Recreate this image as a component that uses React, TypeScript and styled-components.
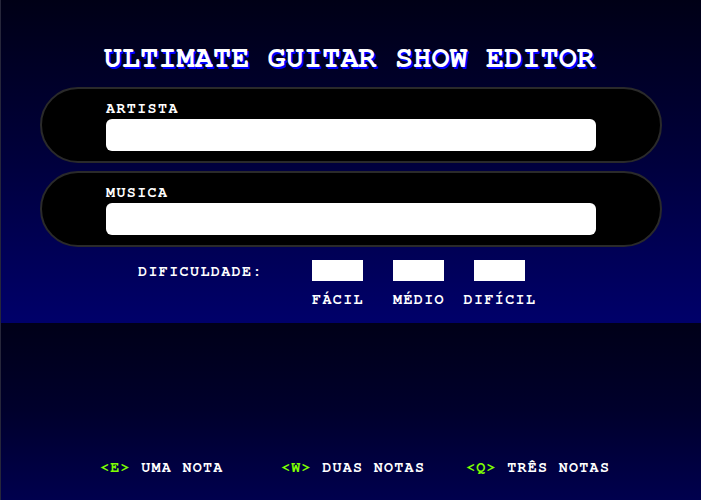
import React from "react";
import styled, { createGlobalStyle } from "styled-components";

const GlobalStyle = createGlobalStyle`
  html, body {
    margin: 0;
    padding: 0;
    background: #000010;
  }
  * { box-sizing: border-box; }
`;

const Screen = styled.div`
  width: 701px;
  height: 500px;
  display: flex;
  flex-direction: column;
  border-left: 1px solid #26263a;
  font-family: "Nimbus Mono PS", "FreeMono", "Courier New", "Liberation Mono", monospace;
  font-weight: bold;
  color: #ffffff;
  overflow: hidden;
`;

const EditorArea = styled.section`
  height: 323px;
  display: flex;
  flex-direction: column;
  align-items: center;
  padding-top: 41px;
  background: linear-gradient(to bottom, #000016 0%, #000038 45%, #00006a 100%);
`;

const Title = styled.h1`
  margin: 0 0 12px 0;
  padding-right: 3px;
  font-size: 30px;
  line-height: 34px;
  font-weight: bold;
  letter-spacing: 0.2px;
  color: #ffffff;
  text-shadow: 2px 2px 0 #0000ff;
  white-space: nowrap;
`;

const FieldPanel = styled.div`
  width: 622px;
  height: 76px;
  margin-bottom: 8px;
  border: 2px solid #2a2a2a;
  border-radius: 38px;
  background: #000000;
  padding: 12px 64px 0 64px;
  display: flex;
  flex-direction: column;
`;

const FieldLabel = styled.label`
  font-size: 15px;
  line-height: 16px;
  letter-spacing: 1.4px;
  margin-bottom: 2px;
`;

const TextInput = styled.input`
  width: 490px;
  height: 32px;
  border: none;
  border-radius: 6px;
  background: #ffffff;
  outline: none;
  padding: 0 8px;
  font-family: inherit;
  font-size: 14px;
`;

const DifficultyRow = styled.div`
  align-self: stretch;
  display: flex;
  align-items: flex-start;
  padding-left: 137px;
  margin-top: 5px;
`;

const DifficultyLabel = styled.span`
  width: 174px;
  font-size: 15px;
  line-height: 21px;
  padding-top: 1px;
  letter-spacing: 1.4px;
`;

const Options = styled.div`
  display: flex;
  gap: 30px;
`;

const Option = styled.div`
  width: 51px;
  display: flex;
  flex-direction: column;
  align-items: center;
`;

const OptionBox = styled.div`
  width: 51px;
  height: 21px;
  background: #ffffff;
`;

const OptionLabel = styled.span`
  margin-top: 11px;
  font-size: 15px;
  line-height: 16px;
  letter-spacing: 1.4px;
  white-space: nowrap;
  padding-left: 1px;
`;

const ControlsArea = styled.section`
  flex: 1;
  display: flex;
  flex-direction: column;
  justify-content: flex-end;
  padding-bottom: 24px;
  background: linear-gradient(to bottom, #000018 0%, #00002c 50%, #00004e 100%);
`;

const Hints = styled.div`
  display: grid;
  grid-template-columns: 181px 185px auto;
  padding-left: 99px;
`;

const Hint = styled.span`
  font-size: 15px;
  line-height: 16px;
  letter-spacing: 1.3px;
  white-space: nowrap;
`;

const Key = styled.span`
  color: #7fff00;
`;

const difficulties = ["FÁCIL", "MÉDIO", "DIFÍCIL"];

const hints = [
  { key: "<E>", text: "UMA NOTA" },
  { key: "<W>", text: "DUAS NOTAS" },
  { key: "<Q>", text: "TRÊS NOTAS" },
];

export default function App() {
  return (
    <>
      <GlobalStyle />
      <Screen>
        <EditorArea>
          <Title>ULTIMATE GUITAR SHOW EDITOR</Title>
          <FieldPanel>
            <FieldLabel>ARTISTA</FieldLabel>
            <TextInput type="text" />
          </FieldPanel>
          <FieldPanel>
            <FieldLabel>MUSICA</FieldLabel>
            <TextInput type="text" />
          </FieldPanel>
          <DifficultyRow>
            <DifficultyLabel>DIFICULDADE:</DifficultyLabel>
            <Options>
              {difficulties.map((d) => (
                <Option key={d}>
                  <OptionBox />
                  <OptionLabel>{d}</OptionLabel>
                </Option>
              ))}
            </Options>
          </DifficultyRow>
        </EditorArea>
        <ControlsArea>
          <Hints>
            {hints.map((h) => (
              <Hint key={h.key}>
                <Key>{h.key}</Key> {h.text}
              </Hint>
            ))}
          </Hints>
        </ControlsArea>
      </Screen>
    </>
  );
}
